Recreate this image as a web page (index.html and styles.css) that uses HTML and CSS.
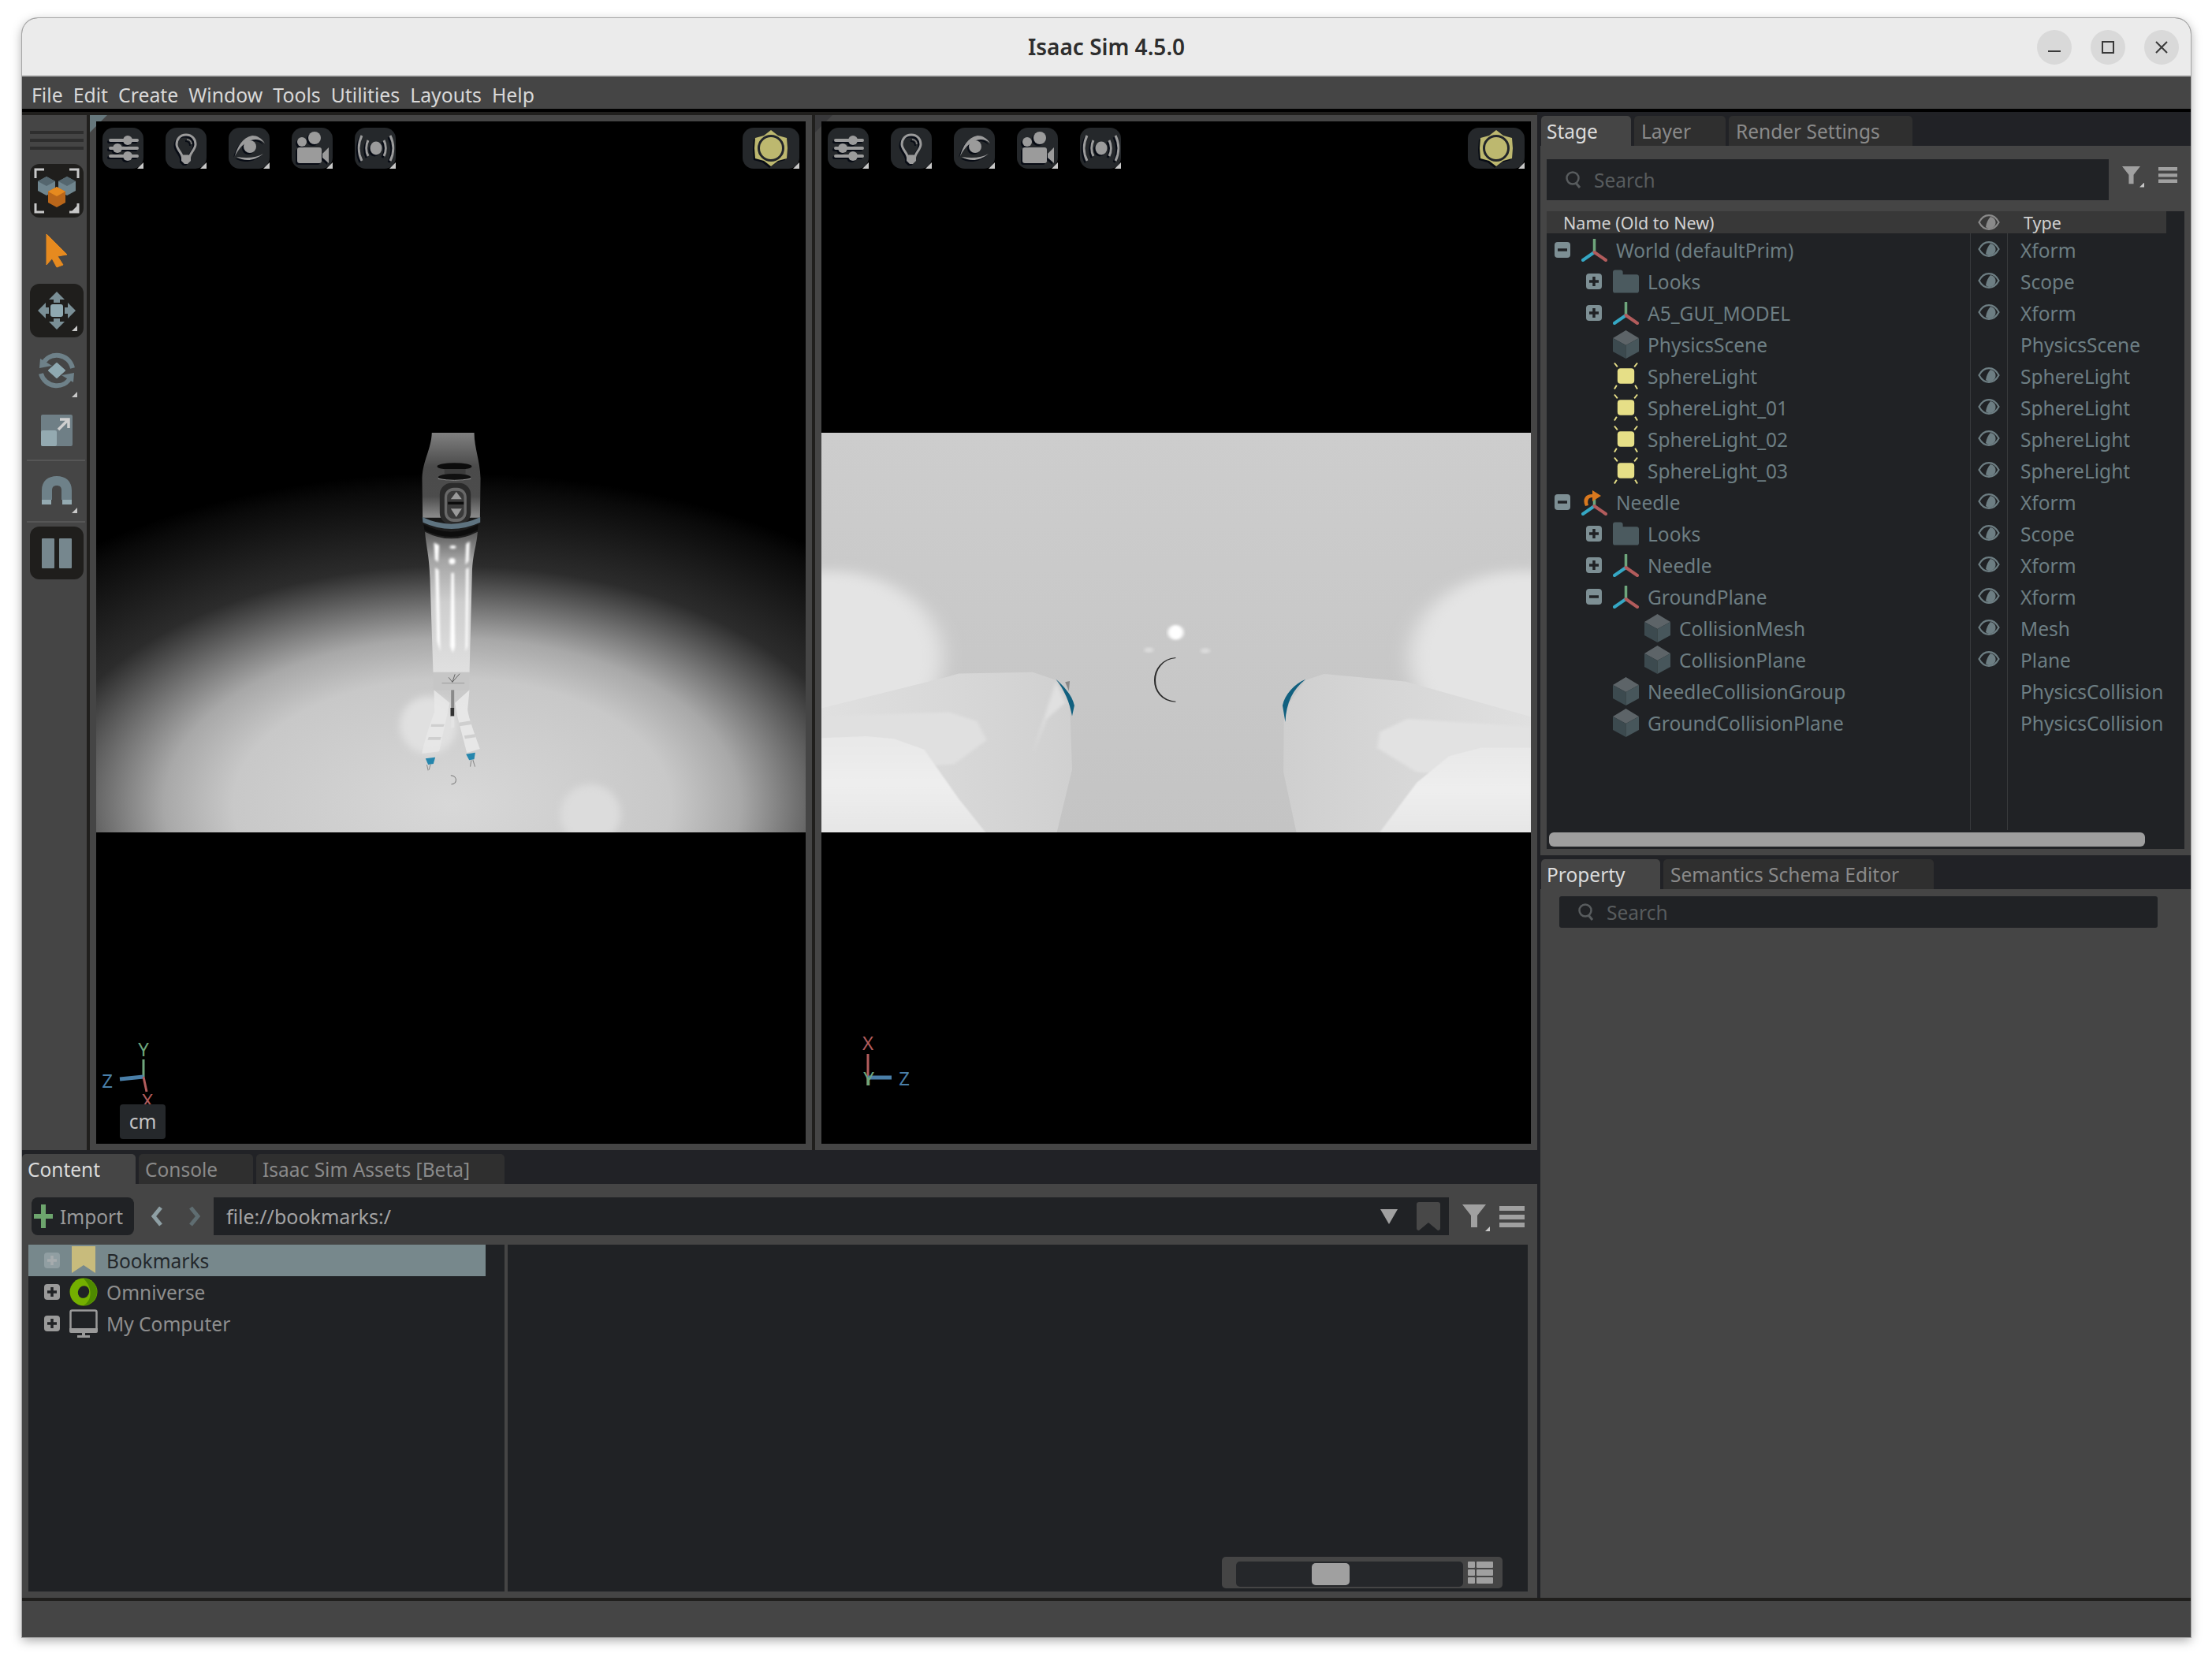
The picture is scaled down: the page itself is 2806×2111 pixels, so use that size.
FILE: index.html
```html
<!DOCTYPE html>
<html lang="en">
<head>
    <meta charset="UTF-8">
    <title>Isaac Sim 4.5.0</title>
    <link rel="stylesheet" href="styles.css">
</head>
<body>

<!-- shared icons -->
<svg class="defs">
    <symbol id="axis" viewBox="0 0 33 29">
        <path d="M16.5 1V17" stroke="#6ea67c" stroke-width="3.500" stroke-linecap="round"/>
        <path d="M16.5 17L2 27" stroke="#35a7c4" stroke-width="4" stroke-linecap="round"/>
        <path d="M16.5 17L31 27" stroke="#b25c5c" stroke-width="4" stroke-linecap="round"/>
    </symbol>
    <symbol id="needle" viewBox="0 0 33 33">
        <path d="M16.5 8V21" stroke="#6ea67c" stroke-width="3.500"/>
        <path d="M16.5 21L2 31" stroke="#35a7c4" stroke-width="4" stroke-linecap="round"/>
        <path d="M16.5 21L31 31" stroke="#b25c5c" stroke-width="4" stroke-linecap="round"/>
        <path d="M5 21C1 12 5 6 14 6V1L25 8L14 15V10C9 10 7 14 9 20Z" fill="#d9781e"/>
    </symbol>
    <symbol id="folder" viewBox="0 0 34 30">
        <path d="M0 3Q0 0 3 0H10Q13 0 13 3V6H31Q34 6 34 9V27Q34 30 31 30H3Q0 30 0 27Z" fill="#4b5a5f"/>
    </symbol>
    <symbol id="cube" viewBox="0 0 33 36">
        <path d="M16.5 0L33 10L16.5 19L0 10Z" fill="#5d6468"/>
        <path d="M0 10L16.5 19V36L0 27Z" fill="#3c4a4f"/>
        <path d="M33 10L16.5 19V36L33 27Z" fill="#47565b"/>
    </symbol>
    <symbol id="light" viewBox="0 0 34 36">
        <rect x="6" y="8" width="22" height="20" rx="4" fill="#e6df87"/>
        <path d="M2 1L6 6M32 1L28 6M2 35L5 30M32 35L29 30" stroke="#e6df87" stroke-width="2"/>
    </symbol>
    <symbol id="eye" viewBox="0 0 28 20">
        <path d="M1.5 10C5 3.500 9 1.200 14 1.200S23 3.500 26.500 10C23 16.500 19 18.800 14 18.800S5 16.500 1.500 10Z" fill="none" stroke="currentColor" stroke-width="2.200"/>
        <path d="M16 3A7.500 7.500 0 1 1 10 16C11 10 13 6 16 3Z" fill="currentColor"/>
    </symbol>
    <symbol id="plus" viewBox="0 0 20 20">
        <rect width="20" height="20" rx="4" fill="currentColor"/>
        <path d="M10 4V16M4 10H16" stroke="#202225" stroke-width="3.500"/>
    </symbol>
    <symbol id="plus-dim" viewBox="0 0 20 20">
        <rect width="20" height="20" rx="4" fill="#909ea2"/>
        <path d="M10 4V16M4 10H16" stroke="#a6acae" stroke-width="3.500"/>
    </symbol>
    <symbol id="minus" viewBox="0 0 20 20">
        <rect width="20" height="20" rx="4" fill="currentColor"/>
        <path d="M4 10H16" stroke="#202225" stroke-width="3.500"/>
    </symbol>
    <symbol id="lens" viewBox="0 0 22 22">
        <circle cx="10" cy="9" r="7.500" fill="none" stroke="currentColor" stroke-width="2.500"/>
        <path d="M14 15L19 21" stroke="currentColor" stroke-width="3"/>
    </symbol>
    <symbol id="funnel" viewBox="0 0 30 30">
        <path d="M0 0H30L19 14V29H11V14Z" fill="currentColor"/>
    </symbol>
    <symbol id="burger" viewBox="0 0 32 27">
        <path d="M0 0H32V6H0ZM0 11H32V17H0ZM0 21H32V27H0Z" fill="currentColor"/>
    </symbol>
    <symbol id="v-sliders" viewBox="0 0 52 52">
        <path d="M10 16H44M10 26H44M10 36H44" stroke="#9b9b9b" stroke-width="4" stroke-linecap="round"/>
        <circle cx="32" cy="16" r="6" fill="#9b9b9b"/><circle cx="19" cy="26" r="6" fill="#9b9b9b"/><circle cx="32" cy="36" r="6" fill="#9b9b9b"/>
    </symbol>
    <symbol id="v-bulb" viewBox="0 0 52 52">
        <path d="M26 9C18 9 14 15 14 21C14 27 20 31 21 36H31C32 31 38 27 38 21C38 15 34 9 26 9Z" fill="none" stroke="#9b9b9b" stroke-width="3"/>
        <path d="M20 36H32V42L28 46H24L20 42Z" fill="#9b9b9b"/>
        <path d="M27 15C31 15 33 18 33 21" fill="none" stroke="#777" stroke-width="2"/>
    </symbol>
    <symbol id="v-eye" viewBox="0 0 52 52">
        <path d="M8 36C11 24 18 12 30 10C36 10 42 13 46 20C42 16 38 15 34 15C24 15 14 24 8 36Z" fill="#9b9b9b"/>
        <circle cx="27" cy="24" r="8" fill="#9b9b9b"/>
        <path d="M10 37C20 43 32 43 44 33C36 38 24 39 10 37Z" fill="#9b9b9b"/>
    </symbol>
    <symbol id="v-camera" viewBox="0 0 52 52">
        <circle cx="29" cy="13" r="8" fill="#9b9b9b"/><circle cx="13" cy="18" r="6" fill="#9b9b9b"/>
        <rect x="7" y="25" width="31" height="20" rx="3" fill="#9b9b9b"/>
        <path d="M39 33L47 25V45L39 38Z" fill="#9b9b9b"/>
    </symbol>
    <symbol id="v-signal" viewBox="0 0 52 52">
        <ellipse cx="27" cy="26" rx="7.500" ry="8.500" fill="#9b9b9b"/>
        <path d="M17 16C14 22 14 30 17 36M37 16C40 22 40 30 37 36M9 10C4 20 4 32 9 42M45 10C50 20 50 32 45 42" fill="none" stroke="#9b9b9b" stroke-width="3"/>
    </symbol>
    <symbol id="v-sun" viewBox="0 0 52 52">
        <path d="M26 3L35 10L46 13L47 26L46 39L35 42L26 49L17 42L6 39L5 26L6 13L17 10Z" fill="#bdb86f"/>
        <circle cx="26" cy="26" r="15.500" fill="#bdb86f" stroke="#22252a" stroke-width="3"/>
    </symbol>
</svg>

<div class="window">
    <div class="titlebar">
        <div class="title">Isaac Sim 4.5.0</div>
        <div class="winbtns">
            <div class="winbtn"><svg width="16" height="16" viewBox="0 0 16 16"><path d="M0 13H16" stroke="#3a3a3a" stroke-width="2"/></svg></div>
            <div class="winbtn"><svg width="16" height="16" viewBox="0 0 16 16"><rect x="1" y="1" width="14" height="14" fill="none" stroke="#3a3a3a" stroke-width="2"/></svg></div>
            <div class="winbtn"><svg width="16" height="16" viewBox="0 0 16 16"><path d="M1 1L15 15M15 1L1 15" stroke="#3a3a3a" stroke-width="2"/></svg></div>
        </div>
    </div>
    <div class="menubar">
        <span>File</span><span>Edit</span><span>Create</span><span>Window</span><span>Tools</span><span>Utilities</span><span>Layouts</span><span>Help</span>
    </div>

    <div class="main">
        <div class="leftcol">
            <div class="upper">
                <div class="toolbar">
                    <div class="grip"><i></i><i></i><i></i></div>
                    <div class="tool tool-box corner">
                        <svg width="60" height="60" viewBox="0 0 60 60">
                            <path d="M3 14V3H14M46 3H57V14M3 46V57H14M57 46V57H46" fill="none" stroke="#c8c8c8" stroke-width="3"/>
                            <path d="M6 18L17 12L28 18V30L17 36L6 30Z" fill="#6f858e"/><path d="M6 18L17 24L28 18L17 12Z" fill="#54666e"/>
                            <path d="M32 18L43 12L54 18V30L43 36L32 30Z" fill="#6f858e"/><path d="M32 18L43 24L54 18L43 12Z" fill="#54666e"/>
                            <path d="M19 31L30 25L41 31V45L30 51L19 45Z" fill="#b9661a"/><path d="M19 31L30 37L41 31L30 25Z" fill="#e68a1f"/>
                        </svg>
                    </div>
                    <div class="tool tool-tall">
                        <svg width="28" height="44" viewBox="0 0 28 44"><path d="M1 1L27 27L15 29L22 40L14 43L8 32L1 40Z" fill="#e68a1f" stroke="#e68a1f" stroke-linejoin="round"/></svg>
                    </div>
                    <div class="tool tool-box corner">
                        <svg width="50" height="50" viewBox="0 0 50 50">
                            <rect x="17" y="17" width="16" height="16" rx="3" fill="#8fa9b1"/>
                            <path d="M25 1L35 11H15ZM25 49L35 39H15ZM1 25L11 15V35ZM49 25L39 15V35Z" fill="#7a8f96"/>
                            <path d="M21 11H29V15H21ZM21 35H29V39H21ZM11 21H15V29H11ZM35 21H39V29H35Z" fill="#7a8f96"/>
                        </svg>
                    </div>
                    <div class="tool tool-tall corner">
                        <svg width="46" height="46" viewBox="0 0 46 46">
                            <path d="M5 16C9 6 18 3 26 4C34 5 41 11 43 20" fill="none" stroke="#6e8189" stroke-width="6"/>
                            <path d="M2 8L17 17L1 20Z" fill="#6e8189"/>
                            <path d="M41 30C37 40 28 43 20 42C12 41 5 35 3 27" fill="none" stroke="#6e8189" stroke-width="6"/>
                            <path d="M44 38L29 29L45 26Z" fill="#6e8189"/>
                            <path d="M23 14L33 23L23 32L13 23Z" fill="#8fa9b1" stroke="#8fa9b1" stroke-linejoin="round" stroke-width="2"/>
                        </svg>
                    </div>
                    <div class="tool tool-scale">
                        <svg width="40" height="40" viewBox="0 0 40 40">
                            <rect width="40" height="40" rx="2" fill="#6f7f86"/>
                            <rect y="20" width="20" height="20" rx="2" fill="#94aab1"/>
                            <path d="M24 6H35V17M34 7L22 19" fill="none" stroke="#cfcfcf" stroke-width="3.500"/>
                        </svg>
                    </div>
                    <div class="sep"></div>
                    <div class="tool tool-magnet corner">
                        <svg width="38" height="36" viewBox="0 0 38 36">
                            <path d="M0 30V18C0 6 8 0 19 0S38 6 38 18V30H25V18C25 14 23 12 19 12S13 14 13 18V30Z" fill="#6e8189"/>
                            <path d="M0 30H12V36H0ZM26 30H38V36H26Z" fill="#94aab1"/>
                        </svg>
                    </div>
                    <div class="sep"></div>
                    <div class="tool tool-box tool-pause">
                        <svg width="38" height="38" viewBox="0 0 38 38">
                            <rect width="16" height="38" rx="1" fill="#76878e"/><rect x="22" width="16" height="38" rx="1" fill="#76878e"/>
                        </svg>
                    </div>
                </div>

                <div class="viewport">
                    <div class="fold"></div>
                    <div class="vp-screen">
                        <svg class="scene" viewBox="-834 87 2697 1521" preserveAspectRatio="none">
                            <defs>
                                <radialGradient id="glow" gradientUnits="userSpaceOnUse" cx="0" cy="0" r="1" gradientTransform="translate(519 1500) scale(2190 1260)">
                                    <stop offset="0" stop-color="#d8d8d8"/>
                                    <stop offset=".38" stop-color="#c8c8c8"/>
                                    <stop offset=".5" stop-color="#a8a8a8"/>
                                    <stop offset=".6" stop-color="#707070"/>
                                    <stop offset=".72" stop-color="#2c2c2c"/>
                                    <stop offset=".95" stop-color="#0a0a0a"/>
                                    <stop offset="1" stop-color="#000"/>
                                </radialGradient>
                                <linearGradient id="head" x1="0" y1="0" x2="0" y2="1">
                                    <stop offset="0" stop-color="#808080"/>
                                    <stop offset=".4" stop-color="#4a4a4a"/>
                                    <stop offset=".75" stop-color="#4c4c4c"/>
                                    <stop offset="1" stop-color="#8c8c8c"/>
                                </linearGradient>
                                <linearGradient id="shaft" x1="0" y1="0" x2="0" y2="1">
                                    <stop offset="0" stop-color="#5a5a5a"/>
                                    <stop offset=".2" stop-color="#a4a4a4"/>
                                    <stop offset=".5" stop-color="#cecece"/>
                                    <stop offset="1" stop-color="#e0e0e0"/>
                                </linearGradient>
                                <filter id="soft" x="-30%" y="-30%" width="160%" height="160%"><feGaussianBlur stdDeviation="14"/></filter>
                                <filter id="softer"><feGaussianBlur stdDeviation="4"/></filter>
                            </defs>
                            <rect x="-834" y="87" width="2697" height="1521" fill="url(#glow)"/>
                            <circle cx="430" cy="1200" r="110" fill="#e0e0e0" filter="url(#soft)"/>
                            <circle cx="1045" cy="1540" r="115" fill="#dcdcdc" filter="url(#soft)"/>

                            <path d="M442 87H603C604 150 625 190 627 260L625 410H407L405 260C408 190 440 150 442 87Z" fill="url(#head)"/>
                            <ellipse cx="528" cy="215" rx="66" ry="13" fill="#0c0c0c"/>
                            <rect x="490" y="225" width="80" height="32" fill="#3c3c3c"/>
                            <ellipse cx="528" cy="256" rx="62" ry="13" fill="#101010"/>
                            <path d="M466 262Q528 274 590 262" fill="none" stroke="#ccc" stroke-width="2"/>
                            <rect x="472" y="278" width="118" height="158" rx="44" fill="#2a2a2a"/>
                            <rect x="490" y="296" width="84" height="130" rx="36" fill="#686868"/>
                            <rect x="500" y="308" width="64" height="106" rx="24" fill="#3a3a3a"/>
                            <path d="M535 312L556 340H514Z" fill="#9a9a9a"/>
                            <path d="M535 408L556 376H514Z" fill="#9a9a9a"/>
                            <rect x="503" y="350" width="60" height="10" fill="#0c0c0c"/>
                            <path d="M406 408Q516 460 626 408V428Q516 478 408 428Z" fill="#5e7380"/>
                            <path d="M411 436Q516 492 618 436L616 458Q516 508 414 458Z" fill="#0d0d0d"/>
                            <path d="M416 464Q516 516 616 464C612 520 598 540 595 620L585 1000H447L435 640C432 550 420 520 416 464Z" fill="url(#shaft)"/>
                            <g fill="#fff" filter="url(#softer)">
                                <path d="M450 505L470 515L466 580L454 570Z"/>
                                <path d="M455 600L468 610L474 920L462 880Z"/>
                                <path d="M516 620H526L530 900L522 925L512 900Z"/>
                                <path d="M572 510L586 500L582 575L570 590Z"/>
                                <path d="M572 605L582 600L578 900L570 920Z"/>
                                <circle cx="519" cy="576" r="12"/>
                                <ellipse cx="522" cy="522" rx="12" ry="6"/>
                            </g>
                            <rect x="447" y="998" width="138" height="68" fill="#c6c6c6"/>
                            <path d="M506 1018L520 1036L530 1006M520 1036L548 1004" fill="none" stroke="#333" stroke-width="2"/>
                            <path d="M480 1040H566" stroke="#888" stroke-width="2"/>
                            <path d="M450 1066L510 1115L470 1300L405 1308C410 1270 440 1180 452 1150Z" fill="#e8e8e8" opacity=".85"/>
                            <path d="M585 1066L530 1115L540 1170L575 1305L625 1290C615 1260 580 1170 578 1140Z" fill="#ebebeb" opacity=".85"/>
                            <path d="M440 1196H490L486 1206H438ZM430 1245H478L474 1256H426ZM545 1190L596 1182L598 1196L548 1204ZM565 1240L606 1234L608 1246L568 1252Z" fill="#cfcfcf"/>
                            <rect x="515" y="1066" width="12" height="70" fill="#8a8a8a"/>
                            <rect x="513" y="1134" width="14" height="32" fill="#333"/>
                            <rect x="515" y="1166" width="12" height="44" fill="#e4e4e4"/>
                            <path d="M418 1327L455 1322L448 1347L428 1350Z" fill="#2586ad"/>
                            <path d="M423 1350L428 1372M437 1349L431 1370" stroke="#888" stroke-width="3"/>
                            <path d="M572 1310L607 1304L603 1330L584 1333Z" fill="#2586ad"/>
                            <path d="M592 1333L588 1358M598 1332L606 1358" stroke="#888" stroke-width="3"/>
                            <path d="M514 1391C540 1392 540 1424 516 1425" fill="none" stroke="#7a7a7a" stroke-width="3"/>
                        </svg>
                        <div class="vp-tools">
                            <div class="vp-btn"><svg width="52" height="52"><use href="#v-sliders"/></svg></div>
                            <div class="vp-btn"><svg width="52" height="52"><use href="#v-bulb"/></svg></div>
                            <div class="vp-btn"><svg width="52" height="52"><use href="#v-eye"/></svg></div>
                            <div class="vp-btn"><svg width="52" height="52"><use href="#v-camera"/></svg></div>
                            <div class="vp-btn"><svg width="52" height="52"><use href="#v-signal"/></svg></div>
                        </div>
                        <div class="vp-btn vp-sun"><svg width="52" height="52"><use href="#v-sun"/></svg></div>
                        <svg class="gizmo" viewBox="0 0 120 140">
                            <path d="M60 44V66" stroke="#6ea67c" stroke-width="3"/>
                            <path d="M30 69L60 66" stroke="#4a7fa8" stroke-width="5"/>
                            <path d="M60 66L64 85" stroke="#b25c5c" stroke-width="3"/>
                            <text x="60" y="40" class="g-y">Y</text>
                            <text x="14" y="80" class="g-z">Z</text>
                            <text x="65" y="105" class="g-x">X</text>
                        </svg>
                        <div class="unit">cm</div>
                    </div>
                </div>

                <div class="viewport">
                    <div class="fold fold-dark"></div>
                    <div class="vp-screen">
                        <svg class="scene" viewBox="3 27 1534 1499" preserveAspectRatio="none">
                            <defs>
                                <linearGradient id="floor" x1="0" y1="0" x2="0" y2="1">
                                    <stop offset="0" stop-color="#cdcdcd"/>
                                    <stop offset="1" stop-color="#c4c4c4"/>
                                </linearGradient>
                                <linearGradient id="jawl" x1="0" y1="0" x2="1" y2="0">
                                    <stop offset="0" stop-color="#e0e0e0"/>
                                    <stop offset="1" stop-color="#d0d0d0"/>
                                </linearGradient>
                                <linearGradient id="jawr" x1="1" y1="0" x2="0" y2="0">
                                    <stop offset="0" stop-color="#e0e0e0"/>
                                    <stop offset="1" stop-color="#cfcfcf"/>
                                </linearGradient>
                                <linearGradient id="lobe" x1="0" y1="0" x2="0" y2="1">
                                    <stop offset="0" stop-color="#e8e8e8"/>
                                    <stop offset=".5" stop-color="#eeeeee"/>
                                    <stop offset="1" stop-color="#e6e6e6"/>
                                </linearGradient>
                                <filter id="blob" x="-30%" y="-30%" width="160%" height="160%"><feGaussianBlur stdDeviation="22"/></filter>
                                <filter id="edge"><feGaussianBlur stdDeviation="2"/></filter>
                            </defs>
                            <rect x="3" y="27" width="1534" height="1499" fill="url(#floor)"/>
                            <ellipse cx="20" cy="870" rx="245" ry="325" fill="#e4e4e4" filter="url(#blob)"/>
                            <ellipse cx="1520" cy="870" rx="245" ry="325" fill="#e4e4e4" filter="url(#blob)"/>

                            <path d="M3 1060L270 945L300 930L460 925L510 955L540 1040L545 1290L512 1526H3Z" fill="url(#jawl)"/>
                            <path d="M3 1090L280 1075L340 1110L360 1180L290 1270L3 1300Z" fill="#e0e0e0" filter="url(#softer)"/>
                            <path d="M3 1172L100 1165L160 1175L225 1215L300 1400L358 1526H3Z" fill="url(#lobe)" filter="url(#edge)"/>
                            <path d="M510 960L530 1040L490 1100L460 1230Z" fill="#e0e0e0" filter="url(#softer)"/>
                            <path d="M510 952C525 975 545 1010 550 1050L545 1090C540 1040 528 990 510 952Z" fill="#11607f"/>
                            <path d="M530 962L540 958L538 996Z" fill="#888"/>

                            <path d="M1537 1092L1265 960L1090 932L1050 955L1015 1040L1003 1100L1002 1300L1030 1526H1537Z" fill="url(#jawr)"/>
                            <path d="M1537 1130L1270 1100L1210 1150L1205 1210L1290 1300L1537 1330Z" fill="#e2e2e2" filter="url(#softer)"/>
                            <path d="M1537 1208H1430L1360 1240L1290 1340L1210 1526H1537Z" fill="url(#lobe)" filter="url(#edge)"/>
                            <path d="M1050 952C1025 970 1005 1010 1000 1050L1006 1112C1008 1040 1022 990 1050 952Z" fill="#11607f"/>

                            <ellipse cx="769" cy="776" rx="17" ry="28" fill="#fff" filter="url(#softer)"/>
                            <circle cx="711" cy="842" r="10" fill="#dcdcdc" filter="url(#softer)"/>
                            <circle cx="833" cy="845" r="10" fill="#dcdcdc" filter="url(#softer)"/>
                            <path d="M769 871C710 880 708 1030 769 1036" fill="none" stroke="#2a2a2a" stroke-width="3.500"/>
                        </svg>
                        <div class="vp-tools">
                            <div class="vp-btn"><svg width="52" height="52"><use href="#v-sliders"/></svg></div>
                            <div class="vp-btn"><svg width="52" height="52"><use href="#v-bulb"/></svg></div>
                            <div class="vp-btn"><svg width="52" height="52"><use href="#v-eye"/></svg></div>
                            <div class="vp-btn"><svg width="52" height="52"><use href="#v-camera"/></svg></div>
                            <div class="vp-btn"><svg width="52" height="52"><use href="#v-signal"/></svg></div>
                        </div>
                        <div class="vp-btn vp-sun"><svg width="52" height="52"><use href="#v-sun"/></svg></div>
                        <svg class="gizmo gizmo2" viewBox="0 0 120 140">
                            <path d="M39 33V73" stroke="#b25c5c" stroke-width="3"/>
                            <path d="M39 63H69" stroke="#4a7fa8" stroke-width="5"/>
                            <path d="M39 63V73" stroke="#6ea67c" stroke-width="3"/>
                            <text x="39" y="28" class="g-x">X</text>
                            <text x="40" y="73" class="g-y">Y</text>
                            <text x="85" y="73" class="g-z">Z</text>
                        </svg>
                    </div>
                </div>
            </div>

            <div class="lower">
                <div class="tabs">
                    <div class="tab active tab-content">Content</div>
                    <div class="tab tab-console">Console</div>
                    <div class="tab tab-assets">Isaac Sim Assets [Beta]</div>
                </div>
                <div class="panel content-panel">
                    <div class="pathbar">
                        <div class="import"><svg width="24" height="32" viewBox="0 0 24 32"><path d="M12 1V31M0 16H24" stroke="#6da56d" stroke-width="6"/></svg><span>Import</span></div>
                        <svg class="chev" width="14" height="26" viewBox="0 0 14 26"><path d="M12 2L3 13L12 24" fill="none" stroke="#8e9fa4" stroke-width="5"/></svg>
                        <svg class="chev chev-off" width="14" height="26" viewBox="0 0 14 26"><path d="M2 2L11 13L2 24" fill="none" stroke="#5f6d71" stroke-width="5"/></svg>
                        <div class="pathbox">
                            <span>file://bookmarks:/</span>
                            <svg class="pathdrop" width="22" height="19" viewBox="0 0 22 19"><path d="M0 0H22L11 19Z" fill="#a0a0a0"/></svg>
                            <svg class="pathmark" width="30" height="36" viewBox="0 0 30 36"><path d="M3 0H27Q30 0 30 3V33Q30 36 27 36L15 26L3 36Q0 36 0 33V3Q0 0 3 0Z" fill="#484848"/></svg>
                        </div>
                        <div class="funnelbtn corner"><svg width="30" height="30"><use href="#funnel"/></svg></div>
                        <svg class="pb-burger" width="32" height="27"><use href="#burger"/></svg>
                    </div>
                    <div class="browser">
                        <div class="bm-tree">
                            <div class="bm-row selected">
                                <svg class="tg" width="20" height="20"><use href="#plus-dim"/></svg>
                                <svg class="bm-ico" width="36" height="36" viewBox="0 0 36 36"><path d="M3 0H33V34L18 24L3 34Z" fill="#c8bb7c"/></svg>
                                <span>Bookmarks</span>
                            </div>
                            <div class="bm-row">
                                <svg class="tg" width="20" height="20"><use href="#plus"/></svg>
                                <svg class="bm-ico" width="36" height="36" viewBox="0 0 36 36">
                                    <circle cx="18" cy="18" r="17.500" fill="#74b000"/>
                                    <path d="M18 1A17 17 0 0 1 18 35C28 30 31 14 18 1Z" fill="#4e8a00"/>
                                    <ellipse cx="18" cy="18" rx="7" ry="8" fill="#202225" transform="rotate(25 18 18)"/>
                                </svg>
                                <span>Omniverse</span>
                            </div>
                            <div class="bm-row">
                                <svg class="tg" width="20" height="20"><use href="#plus"/></svg>
                                <svg class="bm-ico" width="36" height="36" viewBox="0 0 36 36">
                                    <rect x="1.500" y="1.500" width="33" height="25" rx="2" fill="none" stroke="#9a9a9a" stroke-width="2.500"/>
                                    <path d="M0 24H36V28Q36 30 34 30H2Q0 30 0 28Z" fill="#9a9a9a"/>
                                    <path d="M16 30H20V33H26V36H10V33H16Z" fill="#9a9a9a"/>
                                </svg>
                                <span>My Computer</span>
                            </div>
                        </div>
                        <div class="bm-files">
                            <div class="zoomer">
                                <div class="zoomtrack"><div class="zoomthumb"></div></div>
                                <div class="gridicon"><i></i><b></b><i></i><b></b><i></i><b></b></div>
                            </div>
                        </div>
                    </div>
                </div>
            </div>
        </div>

        <div class="rightcol">
            <div class="tabs">
                <div class="tab active tab-stage">Stage</div>
                <div class="tab tab-layer">Layer</div>
                <div class="tab tab-render">Render Settings</div>
            </div>
            <div class="panel stage-panel">
                <div class="stage-search">
                    <div class="search">
                        <svg width="22" height="22"><use href="#lens"/></svg>
                        <span>Search</span>
                    </div>
                    <div class="funnelbtn st-funnel corner"><svg width="23" height="23"><use href="#funnel"/></svg></div>
                    <svg class="st-burger" width="24" height="20" viewBox="0 0 32 27" preserveAspectRatio="none"><use href="#burger"/></svg>
                </div>
                <div class="stage-tree">
                    <div class="st-head">
                        <div class="h-name">Name (Old to New)</div>
                        <div class="h-eye"><svg width="28" height="20"><use href="#eye"/></svg></div>
                        <div class="h-type">Type</div>
                    </div>
                    <div class="st-body">
                        <div class="col-name">
                            <div class="row"><svg class="tg" width="20" height="20"><use href="#minus"/></svg><svg class="ic" width="33" height="29"><use href="#axis"/></svg><span>World (defaultPrim)</span></div>
                            <div class="row lv1"><svg class="tg" width="20" height="20"><use href="#plus"/></svg><svg class="ic" width="33" height="30"><use href="#folder"/></svg><span>Looks</span></div>
                            <div class="row lv1"><svg class="tg" width="20" height="20"><use href="#plus"/></svg><svg class="ic" width="33" height="29"><use href="#axis"/></svg><span>A5_GUI_MODEL</span></div>
                            <div class="row lv1"><i class="tg"></i><svg class="ic" width="33" height="36"><use href="#cube"/></svg><span>PhysicsScene</span></div>
                            <div class="row lv1"><i class="tg"></i><svg class="ic" width="33" height="36"><use href="#light"/></svg><span>SphereLight</span></div>
                            <div class="row lv1"><i class="tg"></i><svg class="ic" width="33" height="36"><use href="#light"/></svg><span>SphereLight_01</span></div>
                            <div class="row lv1"><i class="tg"></i><svg class="ic" width="33" height="36"><use href="#light"/></svg><span>SphereLight_02</span></div>
                            <div class="row lv1"><i class="tg"></i><svg class="ic" width="33" height="36"><use href="#light"/></svg><span>SphereLight_03</span></div>
                            <div class="row"><svg class="tg" width="20" height="20"><use href="#minus"/></svg><svg class="ic" width="33" height="33"><use href="#needle"/></svg><span>Needle</span></div>
                            <div class="row lv1"><svg class="tg" width="20" height="20"><use href="#plus"/></svg><svg class="ic" width="33" height="30"><use href="#folder"/></svg><span>Looks</span></div>
                            <div class="row lv1"><svg class="tg" width="20" height="20"><use href="#plus"/></svg><svg class="ic" width="33" height="29"><use href="#axis"/></svg><span>Needle</span></div>
                            <div class="row lv1"><svg class="tg" width="20" height="20"><use href="#minus"/></svg><svg class="ic" width="33" height="29"><use href="#axis"/></svg><span>GroundPlane</span></div>
                            <div class="row lv2"><i class="tg"></i><svg class="ic" width="33" height="36"><use href="#cube"/></svg><span>CollisionMesh</span></div>
                            <div class="row lv2"><i class="tg"></i><svg class="ic" width="33" height="36"><use href="#cube"/></svg><span>CollisionPlane</span></div>
                            <div class="row lv1"><i class="tg"></i><svg class="ic" width="33" height="36"><use href="#cube"/></svg><span>NeedleCollisionGroup</span></div>
                            <div class="row lv1"><i class="tg"></i><svg class="ic" width="33" height="36"><use href="#cube"/></svg><span>GroundCollisionPlane</span></div>
                        </div>
                        <div class="col-eye">
                            <div class="row"><svg width="28" height="20"><use href="#eye"/></svg></div>
                            <div class="row"><svg width="28" height="20"><use href="#eye"/></svg></div>
                            <div class="row"><svg width="28" height="20"><use href="#eye"/></svg></div>
                            <div class="row"></div>
                            <div class="row"><svg width="28" height="20"><use href="#eye"/></svg></div>
                            <div class="row"><svg width="28" height="20"><use href="#eye"/></svg></div>
                            <div class="row"><svg width="28" height="20"><use href="#eye"/></svg></div>
                            <div class="row"><svg width="28" height="20"><use href="#eye"/></svg></div>
                            <div class="row"><svg width="28" height="20"><use href="#eye"/></svg></div>
                            <div class="row"><svg width="28" height="20"><use href="#eye"/></svg></div>
                            <div class="row"><svg width="28" height="20"><use href="#eye"/></svg></div>
                            <div class="row"><svg width="28" height="20"><use href="#eye"/></svg></div>
                            <div class="row"><svg width="28" height="20"><use href="#eye"/></svg></div>
                            <div class="row"><svg width="28" height="20"><use href="#eye"/></svg></div>
                        </div>
                        <div class="col-type">
                            <div class="row">Xform</div>
                            <div class="row">Scope</div>
                            <div class="row">Xform</div>
                            <div class="row">PhysicsScene</div>
                            <div class="row">SphereLight</div>
                            <div class="row">SphereLight</div>
                            <div class="row">SphereLight</div>
                            <div class="row">SphereLight</div>
                            <div class="row">Xform</div>
                            <div class="row">Scope</div>
                            <div class="row">Xform</div>
                            <div class="row">Xform</div>
                            <div class="row">Mesh</div>
                            <div class="row">Plane</div>
                            <div class="row">PhysicsCollision</div>
                            <div class="row">PhysicsCollision</div>
                        </div>
                    </div>
                    <div class="hscroll"></div>
                </div>
            </div>
            <div class="tabs">
                <div class="tab active tab-property">Property</div>
                <div class="tab tab-schema">Semantics Schema Editor</div>
            </div>
            <div class="panel property-panel">
                <div class="search prop-search">
                    <svg width="22" height="22"><use href="#lens"/></svg>
                    <span>Search</span>
                </div>
            </div>
        </div>
    </div>

    <div class="statusbar"></div>
</div>

</body>
</html>
```

FILE: styles.css
```css
* {
    box-sizing: border-box;
}
body {
    margin: 0;
    height: 2111px;
    background-color: #fff;
    font-family: "Noto Sans", sans-serif;
    font-size: 24.5px;
    overflow: hidden;
}
.defs {
    position: absolute;
    width: 0;
    height: 0;
}

.window {
    display: flex;
    flex-direction: column;
    width: 2751px;
    height: 2054px;
    margin: 23px 0 0 28px;
    border-radius: 20px 20px 0 0;
    overflow: hidden;
    box-shadow: 0 0 0 1px #a6a6a6, 0 4px 14px rgba(0, 0, 0, .35);
    background-color: #454545;
}
.titlebar {
    position: relative;
    display: flex;
    align-items: center;
    justify-content: center;
    height: 74px;
    flex: none;
    background-color: #ebebeb;
    border-bottom: 2px solid #c6c6c6;
}
.title {
    font-size: 28px;
    font-weight: 600;
    color: #2e2e2e;
}
.winbtns {
    position: absolute;
    right: 15px;
    top: 15px;
    display: flex;
    gap: 24px;
}
.winbtn {
    display: flex;
    align-items: center;
    justify-content: center;
    width: 44px;
    height: 44px;
    border-radius: 50%;
    background-color: #d9d9d9;
}
.menubar {
    display: flex;
    align-items: center;
    gap: 13px;
    height: 41px;
    flex: none;
    padding: 4px 0 0 12px;
    color: #d8d8d8;
    font-size: 24.8px;
}

.main {
    display: flex;
    height: 1889px;
    flex: none;
    border-top: 4px solid #000;
    background-color: #212226;
}
.leftcol {
    display: flex;
    flex-direction: column;
    width: 1922px;
    flex: none;
}
.upper {
    display: flex;
    gap: 4px;
    height: 1317px;
    flex: none;
    padding-top: 4px;
    background-color: #201f1d;
}
.toolbar {
    display: flex;
    flex-direction: column;
    align-items: flex-start;
    width: 82px;
    padding: 20px 0 0 10px;
    background-color: #454545;
}
.grip {
    display: flex;
    flex-direction: column;
    gap: 6px;
    width: 68px;
    margin-bottom: 18px;
}
.grip i {
    height: 4px;
    background-color: #2e2e2e;
}
.tool {
    position: relative;
    display: flex;
    align-items: center;
    justify-content: center;
    width: 68px;
}
.tool-box {
    height: 68px;
    border-radius: 12px;
    background-color: #1f1e1c;
}
.tool-tall {
    height: 84px;
}
.tool-scale {
    height: 68px;
}
.tool-magnet {
    height: 74px;
}
.tool-pause {
    height: 67px;
    margin-top: 5px;
}
.corner::after {
    content: "";
    position: absolute;
    right: 8px;
    bottom: 8px;
    width: 7px;
    height: 7px;
    background-color: #c8c8c8;
    clip-path: polygon(100% 0, 100% 100%, 0 100%);
}
.sep {
    width: 74px;
    height: 2px;
    margin: 3px 0 0 -4px;
    background-color: #565656;
}
.tool-magnet + .sep {
    margin-top: 2px;
}

.viewport {
    position: relative;
    width: 916px;
    padding: 8px;
    background-color: #454545;
}
.fold {
    position: absolute;
    left: 0;
    top: 0;
    width: 22px;
    height: 22px;
    background-color: #66777c;
    clip-path: polygon(0 0, 100% 0, 0 100%);
}
.fold-dark {
    background-color: #38383a;
}
.vp-screen {
    position: relative;
    width: 900px;
    height: 1297px;
    background-color: #000;
}
.scene {
    position: absolute;
    left: 0;
    top: 395px;
    width: 900px;
    height: 507px;
}
.vp-tools {
    position: absolute;
    left: 8px;
    top: 8px;
    display: flex;
    gap: 28px;
}
.vp-btn {
    position: relative;
    width: 52px;
    height: 52px;
    border-radius: 14px;
    background-color: #25282b;
}
.vp-btn svg {
    display: block;
    filter: drop-shadow(-2px 2px 0 #070b14);
}
.vp-btn::after {
    content: "";
    position: absolute;
    right: 0;
    bottom: 0;
    width: 8px;
    height: 8px;
    background-color: #c8c8c8;
    clip-path: polygon(100% 0, 100% 100%, 0 100%);
}
.vp-sun {
    position: absolute;
    right: 8px;
    top: 8px;
    display: flex;
    justify-content: center;
    width: 72px;
}
.gizmo {
    position: absolute;
    left: 0;
    top: 1146px;
    width: 120px;
    height: 140px;
}
.gizmo2 {
    left: 20px;
    top: 1150px;
}
.gizmo text {
    font-family: "Noto Sans", sans-serif;
    font-size: 24px;
    text-anchor: middle;
}
.g-x {
    fill: #b25c5c;
}
.g-y {
    fill: #6ea67c;
}
.g-z {
    fill: #4a7fa8;
}
.unit {
    position: absolute;
    left: 30px;
    top: 1247px;
    width: 58px;
    height: 44px;
    border-radius: 4px;
    background-color: #25282b;
    color: #c4c4c4;
    text-align: center;
    line-height: 44px;
}

.tabs {
    display: flex;
    gap: 4px;
    height: 43px;
    flex: none;
    padding: 5px 0 0 0;
    background-color: #212226;
}
.tab {
    height: 38px;
    padding-left: 9px;
    border-radius: 5px 5px 0 0;
    background-color: #2f2f2f;
    color: #8a8a8a;
    line-height: 40px;
    white-space: nowrap;
}
.tab.active {
    padding-left: 7px;
    background-color: #454545;
    color: #dcdcdc;
}
.tab-content { width: 144px; padding-left: 8px; }
.tab-console { width: 145px; padding-left: 8px; }
.tab-assets { width: 315px; padding-left: 8px; }
.tab-stage { width: 114px; margin-left: 1px; }
.tab-layer { width: 116px; }
.tab-render { width: 233px; }
.tab-property { width: 151px; margin-left: 1px; }
.tab-schema { width: 343px; }

.panel {
    background-color: #454545;
}
.lower {
    display: flex;
    flex-direction: column;
    flex: 1;
}
.content-panel {
    display: flex;
    flex: 1;
    flex-direction: column;
    padding: 17px 0 8px 0;
}
.pathbar {
    display: flex;
    align-items: center;
    height: 48px;
    padding: 0 16px 0 12px;
}
.import {
    display: flex;
    align-items: center;
    gap: 9px;
    width: 130px;
    height: 48px;
    padding-left: 3px;
    border-radius: 8px;
    background-color: #202225;
    color: #9a9a9a;
}
.chev {
    margin-left: 22px;
}
.chev-off {
    margin-left: 34px;
}
.pathbox {
    display: flex;
    align-items: center;
    width: 1567px;
    height: 48px;
    margin-left: 17px;
    padding-left: 16px;
    background-color: #202225;
    color: #a4a4a4;
    font-size: 25px;
}
.pathdrop {
    margin-left: auto;
}
.pathmark {
    margin: 0 11px 0 24px;
}
.funnelbtn {
    position: relative;
    flex: none;
    margin-left: 17px;
    color: #a0a0a0;
    line-height: 0;
}
.funnelbtn.corner::after {
    right: -5px;
    bottom: -4px;
    width: 6px;
    height: 6px;
}
.pb-burger {
    margin-left: 17px;
    color: #a0a0a0;
}
.browser {
    display: flex;
    flex: 1;
    margin: 12px 12px 0 8px;
    background-color: #202225;
}
.bm-tree {
    width: 604px;
    flex: none;
}
.bm-row {
    display: flex;
    align-items: center;
    height: 40px;
    padding-left: 20px;
    color: #8e8e8e;
}
.bm-row .tg {
    color: #9a9a9a;
}
.bm-ico {
    margin: 0 11px 0 12px;
}
.bm-row.selected {
    width: 580px;
    background-color: #77888c;
    color: #23272b;
}
.bm-files {
    position: relative;
    flex: 1;
    border-left: 4px solid #454545;
}
.zoomer {
    position: absolute;
    right: 32px;
    bottom: 4px;
    display: flex;
    align-items: flex-start;
    gap: 6px;
    width: 356px;
    height: 40px;
    padding: 6px 12px 0 18px;
    border-radius: 5px;
    background-color: #454545;
}
.zoomtrack {
    width: 288px;
    height: 32px;
    padding: 2px 0 0 96px;
    border-radius: 5px;
    background-color: #25272a;
}
.zoomthumb {
    width: 48px;
    height: 28px;
    border-radius: 5px;
    background-color: #a0a0a0;
}
.gridicon {
    display: grid;
    grid-template-columns: 9px 21px;
    grid-auto-rows: 8px;
    gap: 2px;
}
.gridicon i,
.gridicon b {
    border-radius: 1px;
    background-color: #a0a0a0;
}

.rightcol {
    display: flex;
    flex-direction: column;
    width: 825px;
    margin-left: 4px;
    flex: none;
}
.stage-panel {
    height: 900px;
    flex: none;
    padding: 17px 8px 8px 8px;
}
.stage-search {
    position: relative;
    display: flex;
    align-items: center;
    height: 52px;
}
.search {
    display: flex;
    align-items: center;
    gap: 15px;
    width: 713px;
    height: 52px;
    padding-left: 23px;
    background-color: #202225;
    color: #585c5e;
}
.st-funnel {
    margin: -12px 0 0 17px;
}
.st-burger {
    margin: -12px 0 0 23px;
    color: #a0a0a0;
}
.stage-tree {
    display: flex;
    flex-direction: column;
    height: 809px;
    margin-top: 14px;
    background-color: #202225;
}
.st-head {
    display: flex;
    align-items: center;
    width: 786px;
    height: 28px;
    background-color: #383838;
    color: #d2d2d2;
    font-size: 21.500px;
}
.h-name {
    width: 537px;
    padding-left: 21px;
}
.h-eye {
    display: flex;
    justify-content: center;
    width: 48px;
    color: #8a8a8a;
}
.h-type {
    padding-left: 20px;
}
.st-body {
    display: flex;
    height: 757px;
    flex: none;
    padding-top: 1px;
    color: #6d7e83;
}
.row {
    display: flex;
    align-items: center;
    height: 40px;
    white-space: nowrap;
}
.col-name {
    width: 537px;
}
.col-name .row {
    padding-left: 10px;
}
.col-name .row.lv1 {
    padding-left: 50px;
}
.col-name .row.lv2 {
    padding-left: 90px;
}
i.tg {
    display: block;
    width: 20px;
    height: 20px;
}
.col-name .tg {
    color: #7d8f94;
    flex: none;
}
.ic {
    margin: 0 11px 0 14px;
    flex: none;
}
.col-eye {
    width: 48px;
    margin-top: -1px;
    padding-top: 1px;
    border-left: 1px solid #383a3c;
    border-right: 1px solid #383a3c;
}
.col-eye .row {
    justify-content: center;
    padding-bottom: 3px;
}
.col-type {
    padding-left: 16px;
}
.hscroll {
    width: 756px;
    height: 18px;
    margin: 3px 0 0 3px;
    border-radius: 6px;
    background-color: #9e9e9e;
}
.property-panel {
    flex: 1;
    padding: 9px 0 0 24px;
}
.prop-search {
    width: 759px;
    height: 40px;
    padding-left: 23px;
    border-radius: 3px;
}

.statusbar {
    height: 50px;
    flex: none;
    border-top: 4px solid #201f1d;
    background-color: #454545;
}
```
